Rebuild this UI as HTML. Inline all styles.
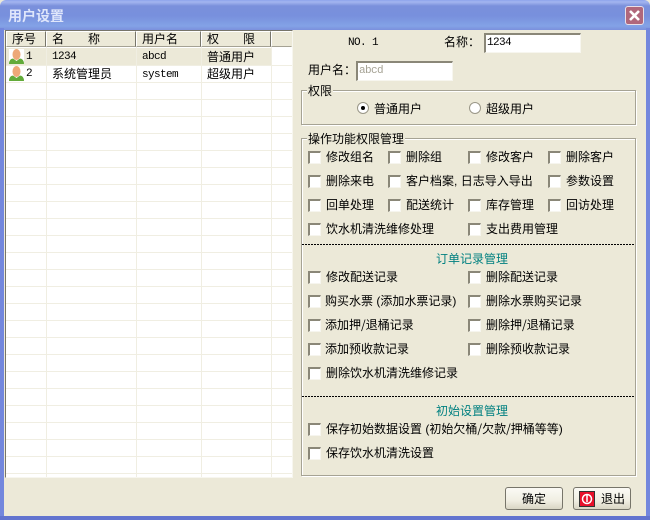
<!DOCTYPE html>
<html><head><meta charset="utf-8">
<style>
html,body{margin:0;padding:0;background:#ece9d8}
#w{position:relative;width:650px;height:520px;overflow:hidden;background:#ece9d8;font:12px/14px "WenQuanYi Zen Hei","Noto Sans CJK SC",sans-serif;color:#000}
#w div,#w span{position:absolute;white-space:nowrap;box-sizing:border-box}
.t{height:14px}
.n{font-style:normal;font-family:"Liberation Sans",sans-serif}
.c{width:13px;height:13px;background:#fff;border-top:2px solid #8a8778;border-left:2px solid #8a8778;border-right:1px solid #f6f5ee;border-bottom:1px solid #f6f5ee}
.g{background:#f0eee2}
.h{top:31px;height:16px;background:#ece9d8;border-top:1px solid #fff;border-left:1px solid #fff;border-right:1px solid #77756a;border-bottom:1px solid #a5a294;line-height:14px}
.m{font-family:"Liberation Mono",monospace;font-size:11px;letter-spacing:-.6px}
.gb{border:1px solid #a6a394;box-shadow:1px 1px 0 #fff,inset 1px 1px 0 #fff}
.lg{background:#ece9d8;padding:0 1px;height:14px}
.d{left:302px;width:332px;height:1px;background:repeating-linear-gradient(90deg,#000 0,#000 2px,transparent 2px,transparent 3px)}
.tl{color:#008080;left:436px}
.b{background:linear-gradient(#fbfaf5,#f0eee2 60%,#d9d5c4);border:1px solid #77756a;border-radius:3px;text-align:center;line-height:21px}
</style></head><body><div id="w">
<div style="left:0;top:0;width:650px;height:30px;border-radius:6px 6px 0 0;background:linear-gradient(#8ea4ec 0,#a3b5f0 2px,#7a90dc 6px,#7890dd 16px,#83a2e6 26px,#7b90dc 30px)"></div>
<div class="t" style="left:8px;top:8px;font-size:14px;line-height:16px;height:16px;color:#dfe6fb;font-weight:bold">用户设置</div>
<div style="left:625px;top:6px;width:19px;height:19px;border:1px solid #e8dfe8;border-radius:3px;background:#b0677c"></div>
<svg style="position:absolute;left:625px;top:6px" width="19" height="19"><path d="M5 5L14 14M14 5L5 14" stroke="#fff" stroke-width="2.6"/></svg>
<div style="left:0;top:28px;width:4px;height:492px;background:#7387dd"></div>
<div style="left:646px;top:28px;width:4px;height:492px;background:#7387dd"></div>
<div style="left:0;top:516px;width:650px;height:4px;background:#6274cf"></div>

<div style="left:5px;top:30px;width:288px;height:448px;background:#fff;border-left:1px solid #77756a;border-top:1px solid #77756a;border-right:1px solid #f7f6ef;border-bottom:1px solid #f7f6ef"></div>
<div style="left:6px;top:48px;width:265px;height:17px;background:#ece9d8"></div>
<div class="g" style="left:6px;top:65px;width:286px;height:1px"></div><div class="g" style="left:6px;top:82px;width:286px;height:1px"></div><div class="g" style="left:6px;top:99px;width:286px;height:1px"></div><div class="g" style="left:6px;top:116px;width:286px;height:1px"></div><div class="g" style="left:6px;top:133px;width:286px;height:1px"></div><div class="g" style="left:6px;top:150px;width:286px;height:1px"></div><div class="g" style="left:6px;top:167px;width:286px;height:1px"></div><div class="g" style="left:6px;top:184px;width:286px;height:1px"></div><div class="g" style="left:6px;top:201px;width:286px;height:1px"></div><div class="g" style="left:6px;top:218px;width:286px;height:1px"></div><div class="g" style="left:6px;top:235px;width:286px;height:1px"></div><div class="g" style="left:6px;top:252px;width:286px;height:1px"></div><div class="g" style="left:6px;top:269px;width:286px;height:1px"></div><div class="g" style="left:6px;top:286px;width:286px;height:1px"></div><div class="g" style="left:6px;top:303px;width:286px;height:1px"></div><div class="g" style="left:6px;top:320px;width:286px;height:1px"></div><div class="g" style="left:6px;top:337px;width:286px;height:1px"></div><div class="g" style="left:6px;top:354px;width:286px;height:1px"></div><div class="g" style="left:6px;top:371px;width:286px;height:1px"></div><div class="g" style="left:6px;top:388px;width:286px;height:1px"></div><div class="g" style="left:6px;top:405px;width:286px;height:1px"></div><div class="g" style="left:6px;top:422px;width:286px;height:1px"></div><div class="g" style="left:6px;top:439px;width:286px;height:1px"></div><div class="g" style="left:6px;top:456px;width:286px;height:1px"></div><div class="g" style="left:6px;top:473px;width:286px;height:1px"></div>
<div class="g" style="left:46px;top:47px;width:1px;height:430px"></div><div class="g" style="left:136px;top:47px;width:1px;height:430px"></div><div class="g" style="left:201px;top:47px;width:1px;height:430px"></div><div class="g" style="left:271px;top:47px;width:1px;height:430px"></div>

<div class="h" style="left:6px;width:40px"><span style="left:5px;top:0">序号</span></div>
<div class="h" style="left:46px;width:90px"><span style="left:5px;top:0">名</span><span style="left:41px;top:0">称</span></div>
<div class="h" style="left:136px;width:65px"><span style="left:5px;top:0">用户名</span></div>
<div class="h" style="left:201px;width:70px"><span style="left:5px;top:0">权</span><span style="left:41px;top:0">限</span></div>
<div class="h" style="left:271px;width:21px;border-right:1px solid #ece9d8"></div>

<svg style="position:absolute;left:9px;top:49px" width="15" height="15"><rect width="15" height="15" fill="#fff"/><ellipse cx="7.5" cy="5.5" rx="4" ry="5.5" fill="#eda877"/><path d="M0 15Q0 10 4 9.5L7.5 12L11 9.5Q15 10 15 15Z" fill="#62ab3a"/></svg>
<svg style="position:absolute;left:9px;top:66px" width="15" height="15"><ellipse cx="7.5" cy="5.5" rx="4" ry="5.5" fill="#eda877"/><path d="M0 15Q0 10 4 9.5L7.5 12L11 9.5Q15 10 15 15Z" fill="#62ab3a"/></svg>
<div class="t m" style="left:26px;top:50px">1</div><div class="t m" style="left:52px;top:50px">1234</div><div class="t m" style="left:142px;top:50px">abcd</div><div class="t" style="left:207px;top:50px">普通用户</div>
<div class="t m" style="left:26px;top:67px">2</div><div class="t" style="left:52px;top:67px">系统管理员</div><div class="t m" style="left:142px;top:68px">system</div><div class="t" style="left:207px;top:67px">超级用户</div>

<div class="t m" style="left:348px;top:36px">NO. 1</div>
<div class="t" style="left:444px;top:35px">名称：</div>
<div style="left:484px;top:33px;width:97px;height:20px;background:#fff;border-top:2px solid #8a8778;border-left:2px solid #8a8778;border-right:1px solid #f7f6ef;border-bottom:1px solid #f7f6ef"></div>
<div class="t m" style="left:487px;top:36px">1234</div>
<div class="t" style="left:308px;top:63px">用户名：</div>
<div style="left:356px;top:61px;width:97px;height:20px;background:#fff;border-top:2px solid #8a8778;border-left:2px solid #8a8778;border-right:1px solid #f7f6ef;border-bottom:1px solid #f7f6ef"></div>
<div class="t m" style="left:359px;top:64px;color:#a5a294">abcd</div>

<div class="gb" style="left:301px;top:90px;width:335px;height:35px"></div>
<div class="t lg" style="left:307px;top:84px">权限</div>
<div style="left:357px;top:102px;width:12px;height:12px;border-radius:50%;background:#fff;border:1px solid #9a9788"></div><div style="left:361px;top:106px;width:4px;height:4px;border-radius:50%;background:#000"></div>
<div class="t" style="left:374px;top:102px">普通用户</div>
<div style="left:469px;top:102px;width:12px;height:12px;border-radius:50%;background:#fff;border:1px solid #9a9788"></div>
<div class="t" style="left:486px;top:102px">超级用户</div>

<div class="gb" style="left:301px;top:138px;width:335px;height:338px"></div>
<div class="t lg" style="left:307px;top:132px">操作功能权限管理</div>

<div class="c" style="left:308px;top:151px"></div><div class="t" style="left:326px;top:150px">修改组名</div>
<div class="c" style="left:388px;top:151px"></div><div class="t" style="left:406px;top:150px">删除组</div>
<div class="c" style="left:468px;top:151px"></div><div class="t" style="left:486px;top:150px">修改客户</div>
<div class="c" style="left:548px;top:151px"></div><div class="t" style="left:566px;top:150px">删除客户</div>
<div class="c" style="left:308px;top:175px"></div><div class="t" style="left:326px;top:174px">删除来电</div>
<div class="c" style="left:388px;top:175px"></div><div class="t" style="left:406px;top:174px">客户档案<i class="n">, </i>日志导入导出</div>
<div class="c" style="left:548px;top:175px"></div><div class="t" style="left:566px;top:174px">参数设置</div>
<div class="c" style="left:308px;top:199px"></div><div class="t" style="left:326px;top:198px">回单处理</div>
<div class="c" style="left:388px;top:199px"></div><div class="t" style="left:406px;top:198px">配送统计</div>
<div class="c" style="left:468px;top:199px"></div><div class="t" style="left:486px;top:198px">库存管理</div>
<div class="c" style="left:548px;top:199px"></div><div class="t" style="left:566px;top:198px">回访处理</div>
<div class="c" style="left:308px;top:223px"></div><div class="t" style="left:326px;top:222px">饮水机清洗维修处理</div>
<div class="c" style="left:468px;top:223px"></div><div class="t" style="left:486px;top:222px">支出费用管理</div>

<div class="d" style="top:244px"></div>
<div class="t tl" style="top:252px">订单记录管理</div>
<div class="c" style="left:308px;top:271px"></div><div class="t" style="left:326px;top:270px">修改配送记录</div>
<div class="c" style="left:468px;top:271px"></div><div class="t" style="left:486px;top:270px">删除配送记录</div>
<div class="c" style="left:308px;top:295px"></div><div class="t" style="left:325px;top:294px">购买水票<i class="n"> (</i>添加水票记录<i class="n">)</i></div>
<div class="c" style="left:468px;top:295px"></div><div class="t" style="left:486px;top:294px">删除水票购买记录</div>
<div class="c" style="left:308px;top:319px"></div><div class="t" style="left:325px;top:318px">添加押/退桶记录</div>
<div class="c" style="left:468px;top:319px"></div><div class="t" style="left:486px;top:318px">删除押/退桶记录</div>
<div class="c" style="left:308px;top:343px"></div><div class="t" style="left:325px;top:342px">添加预收款记录</div>
<div class="c" style="left:468px;top:343px"></div><div class="t" style="left:486px;top:342px">删除预收款记录</div>
<div class="c" style="left:308px;top:367px"></div><div class="t" style="left:326px;top:366px">删除饮水机清洗维修记录</div>

<div class="d" style="top:396px"></div>
<div class="t tl" style="top:404px">初始设置管理</div>
<div class="c" style="left:308px;top:423px"></div><div class="t" style="left:326px;top:422px">保存初始数据设置<i class="n"> (</i>初始欠桶/欠款/押桶等等<i class="n">)</i></div>
<div class="c" style="left:308px;top:447px"></div><div class="t" style="left:326px;top:446px">保存饮水机清洗设置</div>

<div class="b" style="left:505px;top:487px;width:58px;height:23px">确定</div>
<div class="b" style="left:573px;top:487px;width:58px;height:23px;text-align:left;padding-left:27px">退出</div>
<div style="left:579px;top:491px;width:16px;height:16px;background:#e8102a;border:1px solid #333"></div>
<svg style="position:absolute;left:579px;top:491px" width="16" height="16"><circle cx="8" cy="8" r="4.5" fill="none" stroke="#fff" stroke-width="1.5"/><path d="M8 4V11" stroke="#fff" stroke-width="1.5"/></svg>
</div></body></html>
